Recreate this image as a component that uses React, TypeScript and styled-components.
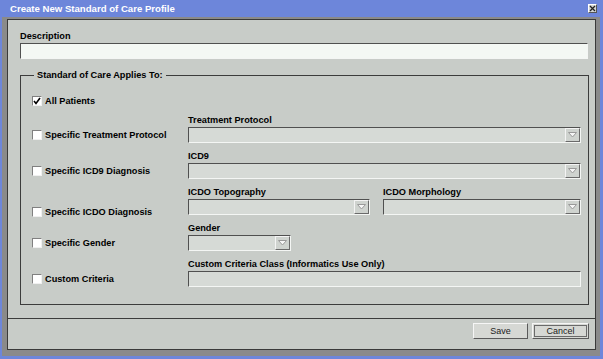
import styled, { createGlobalStyle } from "styled-components";

const GlobalStyle = createGlobalStyle`
  html, body {
    margin: 0;
    padding: 0;
    background: #6d86da;
  }
  body {
    font-family: "Liberation Sans", Arial, sans-serif;
    color: #000;
  }
`;

// Window chrome
const Window = styled.div`
  width: 603px;
  height: 359px;
  box-sizing: border-box;
  background: #6d86da;
  display: flex;
  flex-direction: column;
  padding: 0 3px 3px 2px;
`;

const TitleBar = styled.div`
  height: 17px;
  flex: none;
  display: flex;
  align-items: center;
  justify-content: space-between;
  padding: 0 3px 0 8px;
  color: #ffffff;
  font-size: 9.6px;
  font-weight: bold;
`;

const CloseButton = styled.div`
  width: 9px;
  height: 9px;
  box-sizing: border-box;
  background: #d4d6d4;
  border-top: 1px solid #ffffff;
  border-left: 1px solid #ffffff;
  border-right: 1px solid #555;
  border-bottom: 1px solid #555;
  display: flex;
  align-items: center;
  justify-content: center;
`;

const Frame = styled.div`
  flex: 1;
  display: flex;
  background: #8a8a8a;
  padding: 2px 4px 6px 5px;
`;

const Panel = styled.div`
  flex: 1;
  display: flex;
  flex-direction: column;
  border: 1px solid #3a3a3a;
  background: #c8ccc8;
`;

const Main = styled.div`
  flex: 1;
  display: flex;
  flex-direction: column;
  padding: 11px 6px 0 12px;
`;

const Label = styled.div`
  font-size: 9.2px;
  font-weight: bold;
  line-height: 11px;
  white-space: nowrap;
`;

const TextInput = styled.div<{ $disabled?: boolean }>`
  height: 16px;
  box-sizing: border-box;
  margin-top: 1px;
  margin-right: ${(p) => (p.$disabled ? 0 : 1)}px;
  background: ${(p) => (p.$disabled ? "#d6dad6" : "#f4f8f4")};
  border-top: 1px solid #505050;
  border-left: 1px solid #505050;
  border-right: 1px solid #f4f6f4;
  border-bottom: 1px solid #f4f6f4;
`;

// Group box
const Group = styled.fieldset`
  margin: 11px 0 0 0;
  padding: 13px 7px 17px 11px;
  min-width: 0;
  border: 1px solid #3c3c3c;
  display: grid;
  grid-template-columns: 156px 1fr;
  row-gap: 8px;
`;

const Legend = styled.legend`
  margin-left: 2px;
  padding: 0 3px;
  font-size: 9.2px;
  font-weight: bold;
  line-height: 11px;
`;

const CheckCell = styled.label<{ $sink?: number; $first?: boolean }>`
  grid-column: 1;
  display: flex;
  align-items: center;
  gap: 3px;
  height: ${(p) => (p.$first ? 13 : 16)}px;
  align-self: end;
  margin-bottom: ${(p) => -(p.$sink || 0)}px;
  font-size: 9.2px;
  font-weight: bold;
  white-space: nowrap;
`;

const Box = styled.span`
  width: 10px;
  height: 10px;
  flex: none;
  box-sizing: border-box;
  background: #ffffff;
  border-top: 1px solid #808080;
  border-left: 1px solid #808080;
  border-right: 1px solid #f0f0f0;
  border-bottom: 1px solid #f0f0f0;
  display: flex;
  align-items: center;
  justify-content: center;
`;

const FieldCell = styled.div`
  grid-column: 2;
  display: flex;
  flex-direction: column;
`;

const SplitFields = styled.div`
  grid-column: 2;
  display: grid;
  grid-template-columns: 182px 1fr;
  column-gap: 13px;
`;

const SubField = styled.div`
  display: flex;
  flex-direction: column;
`;

const Combo = styled.div<{ $width?: number }>`
  height: 16px;
  width: ${(p) => (p.$width ? `${p.$width}px` : "auto")};
  box-sizing: border-box;
  margin-top: 1px;
  background: #d6dad6;
  border-top: 1px solid #505050;
  border-left: 1px solid #505050;
  border-right: 1px solid #f4f6f4;
  border-bottom: 1px solid #f4f6f4;
  display: flex;
  justify-content: flex-end;
`;

const ArrowButton = styled.div`
  width: 15px;
  height: 14px;
  box-sizing: border-box;
  background: #cfd3cf;
  border-top: 1px solid #f4f4f4;
  border-left: 1px solid #f4f4f4;
  border-right: 1px solid #6a6a6a;
  border-bottom: 1px solid #6a6a6a;
  display: flex;
  align-items: center;
  justify-content: center;
`;

// Footer
const Footer = styled.div`
  flex: none;
  height: 26px;
  border-top: 1px solid #3c3c3c;
  display: flex;
  justify-content: flex-end;
  align-items: flex-start;
  gap: 4px;
  padding: 4px 6px 0 0;
`;

const Button = styled.button<{ $width: number; $focused?: boolean }>`
  width: ${(p) => p.$width}px;
  height: 16px;
  box-sizing: border-box;
  padding: 0;
  background: #d6d8d4;
  border-top: 1px solid #f6f6f6;
  border-left: 1px solid #f6f6f6;
  border-right: 1px solid #5a5a5a;
  border-bottom: 1px solid #5a5a5a;
  font-family: "Liberation Sans", Arial, sans-serif;
  font-size: 9px;
  color: #222;
  outline: ${(p) => (p.$focused ? "1px solid #6a6a6a" : "none")};
  outline-offset: -3px;
`;

function Check({ checked }: { checked?: boolean }) {
  return (
    <Box>
      {checked && (
        <svg width="8" height="8" viewBox="0 0 8 8">
          <path d="M1 4 L3 6.5 L7 1" fill="none" stroke="#000" strokeWidth="1.6" />
        </svg>
      )}
    </Box>
  );
}

function Dropdown({ width }: { width?: number }) {
  return (
    <Combo $width={width}>
      <ArrowButton>
        <svg width="9" height="6" viewBox="0 0 9 6">
          <path d="M0.5 0.5 L8.5 0.5 L4.5 5 Z" fill="#f6f6f6" stroke="#9a9a9a" strokeWidth="1" />
        </svg>
      </ArrowButton>
    </Combo>
  );
}

export default function App() {
  return (
    <>
      <GlobalStyle />
      <Window>
        <TitleBar>
          <span>Create New Standard of Care Profile</span>
          <CloseButton>
            <svg width="7" height="7" viewBox="0 0 7 7">
              <path d="M1 1 L6 6 M6 1 L1 6" stroke="#222" strokeWidth="1.3" />
            </svg>
          </CloseButton>
        </TitleBar>
        <Frame>
          <Panel>
            <Main>
              <Label>Description</Label>
              <TextInput />
              <Group>
                <Legend>Standard of Care Applies To:</Legend>

                <CheckCell $first>
                  <Check checked /> All Patients
                </CheckCell>

                <CheckCell>
                  <Check /> Specific Treatment Protocol
                </CheckCell>
                <FieldCell>
                  <Label>Treatment Protocol</Label>
                  <Dropdown />
                </FieldCell>

                <CheckCell>
                  <Check /> Specific ICD9 Diagnosis
                </CheckCell>
                <FieldCell>
                  <Label>ICD9</Label>
                  <Dropdown />
                </FieldCell>

                <CheckCell $sink={5}>
                  <Check /> Specific ICDO Diagnosis
                </CheckCell>
                <SplitFields>
                  <SubField>
                    <Label>ICDO Topography</Label>
                    <Dropdown />
                  </SubField>
                  <SubField>
                    <Label>ICDO Morphology</Label>
                    <Dropdown />
                  </SubField>
                </SplitFields>

                <CheckCell>
                  <Check /> Specific Gender
                </CheckCell>
                <FieldCell>
                  <Label>Gender</Label>
                  <Dropdown width={103} />
                </FieldCell>

                <CheckCell>
                  <Check /> Custom Criteria
                </CheckCell>
                <FieldCell>
                  <Label>Custom Criteria Class (Informatics Use Only)</Label>
                  <TextInput $disabled />
                </FieldCell>
              </Group>
            </Main>
            <Footer>
              <Button $width={55}>Save</Button>
              <Button $width={57} $focused>
                Cancel
              </Button>
            </Footer>
          </Panel>
        </Frame>
      </Window>
    </>
  );
}
